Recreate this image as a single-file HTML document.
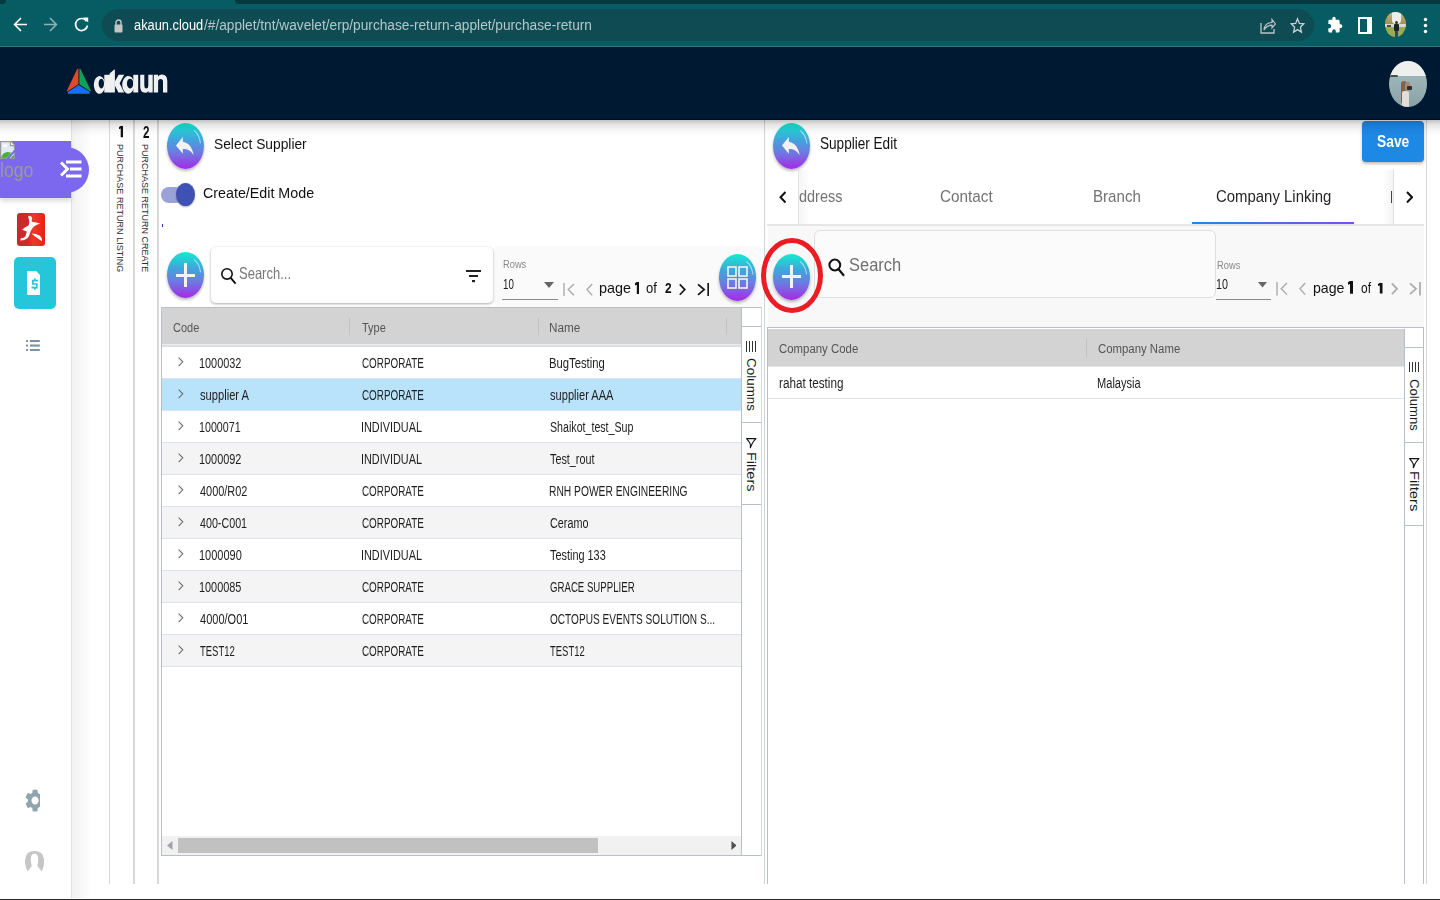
<!DOCTYPE html>
<html><head><meta charset="utf-8"><title>akaun</title>
<style>
html,body{margin:0;padding:0;background:#fff;width:1440px;height:900px;overflow:hidden}
#root{position:relative;width:1440px;height:900px;overflow:hidden;background:#fff;font-family:"Liberation Sans",sans-serif}
.a{position:absolute;display:block}
.t{position:absolute;white-space:nowrap;line-height:1;transform-origin:0 0}
</style></head><body><div id="root">
<div class="a" style="left:0px;top:0px;width:1440px;height:47px;background:#075c63"></div>
<div class="a" style="left:235px;top:0px;width:1205px;height:4px;background:#04393f;border-bottom-left-radius:6px"></div>
<div class="a" style="left:0px;top:0px;width:6px;height:4px;background:#04393f;border-bottom-right-radius:6px"></div>
<div class="a" style="left:0px;top:46px;width:1440px;height:1px;background:#2f777c"></div>
<svg class="a" style="left:13px;top:16px;" width="15" height="17" viewBox="0 0 15 17" preserveAspectRatio="none"><path d="M14 8.5H2 M8 2L1.6 8.5L8 15" stroke="#fff" stroke-width="1.6" fill="none"/></svg>
<svg class="a" style="left:44px;top:16px;" width="14" height="17" viewBox="0 0 14 17" preserveAspectRatio="none"><path d="M0 8.5H12.4 M6 2L12.4 8.5L6 15" stroke="#8bb3b6" stroke-width="1.6" fill="none"/></svg>
<svg class="a" style="left:74px;top:16px;" width="15" height="17" viewBox="0 0 15 17" preserveAspectRatio="none"><path d="M12.6 5.2 A6 6 0 1 0 13.5 9.5" stroke="#fff" stroke-width="1.7" fill="none"/><path d="M9 1.5 L14.2 1.5 L14.2 6.6 Z" fill="#fff"/></svg>
<div class="a" style="left:102px;top:9px;width:1212px;height:32px;background:#0f4b52;border-radius:16px"></div>
<svg class="a" style="left:114px;top:18px;" width="9" height="15" viewBox="0 0 9 15" preserveAspectRatio="none"><path d="M2 7V4.5A2.5 2.5 0 0 1 7 4.5V7" stroke="#c2c6c7" stroke-width="1.4" fill="none"/><rect x="0.5" y="6.5" width="8" height="8" rx="1" fill="#c2c6c7"/></svg>
<span class="t" style="left:134.20px;top:18.35px;font-size:14.70px;color:#ffffff;font-weight:400;font-family:'Liberation Sans';transform:scaleX(0.8730);">akaun.cloud</span>
<span class="t" style="left:204.20px;top:18.35px;font-size:14.70px;color:#b3c8ca;font-weight:400;font-family:'Liberation Sans';transform:scaleX(0.9317);">/#/applet/tnt/wavelet/erp/purchase-return-applet/purchase-return</span>
<svg class="a" style="left:1260px;top:17px;" width="16" height="17" viewBox="0 0 16 17" preserveAspectRatio="none"><path d="M1 6V16H14V12" stroke="#b8c6c8" stroke-width="1.3" fill="none"/><path d="M4 13C4.5 8 8 5.5 12 5.5V2.5L15.5 7L12 11V8.2C8.5 8.2 6 10 4 13Z" stroke="#b8c6c8" stroke-width="1.2" fill="none"/></svg>
<svg class="a" style="left:1290px;top:17px;" width="15" height="17" viewBox="0 0 24 24" preserveAspectRatio="none"><path d="M12 2.5l2.9 6.6 7.1.6-5.4 4.7 1.6 7-6.2-3.7-6.2 3.7 1.6-7L2 9.7l7.1-.6z" stroke="#c9d4d5" stroke-width="2" fill="none"/></svg>
<svg class="a" style="left:1327px;top:16px;" width="16" height="18" viewBox="0 0 24 24" preserveAspectRatio="none"><path d="M20.5 11H19V7c0-1.1-.9-2-2-2h-4V3.5C13 2.12 11.88 1 10.5 1S8 2.12 8 3.5V5H4c-1.1 0-1.99.9-1.99 2v3.8H3.5c1.49 0 2.7 1.21 2.7 2.7s-1.21 2.7-2.7 2.7H2V20c0 1.1.9 2 2 2h3.8v-1.5c0-1.49 1.21-2.7 2.7-2.7 1.49 0 2.7 1.21 2.7 2.7V22H17c1.1 0 2-.9 2-2v-4h1.5c1.38 0 2.5-1.12 2.5-2.5S21.88 11 20.5 11z" fill="#fff"/></svg>
<svg class="a" style="left:1358px;top:16.5px;" width="14" height="17.0" viewBox="0 0 14 17" preserveAspectRatio="none"><rect x="1" y="1" width="12" height="15" stroke="#fff" stroke-width="2" fill="none"/><rect x="9" y="1" width="4" height="15" fill="#fff"/></svg>
<div class="a" style="left:1385.2px;top:11.7px;width:20.8px;height:25.8px;border-radius:50%;overflow:hidden;background:#9aac50"><div class="a" style="left:0;top:0;width:21px;height:26px;filter:blur(0.5px)"><div class="a" style="left:0;top:0;width:21px;height:14px;background:linear-gradient(#c9b27a,#9c8a4c)"></div><div class="a" style="left:7px;top:0;width:9px;height:12px;border-radius:0 0 4px 4px;background:#eceeec"></div><div class="a" style="left:0;top:12px;width:21px;height:3px;background:#d9dcd6"></div><div class="a" style="left:2px;top:13px;width:4px;height:2px;background:#50503a"></div><div class="a" style="left:9.5px;top:9.5px;width:3px;height:3px;border-radius:50%;background:#3a3226"></div><div class="a" style="left:8.5px;top:12.5px;width:5px;height:7px;border-radius:1px;background:#1c222c"></div><div class="a" style="left:9.5px;top:19.5px;width:3px;height:7px;background:#2b4676"></div></div></div>
<svg class="a" style="left:1423px;top:17px;" width="5" height="17" viewBox="0 0 5 17" preserveAspectRatio="none"><circle cx="2.5" cy="2.5" r="1.7" fill="#fff"/><circle cx="2.5" cy="8.5" r="1.7" fill="#fff"/><circle cx="2.5" cy="14.5" r="1.7" fill="#fff"/></svg>
<div class="a" style="left:0px;top:47px;width:1440px;height:73px;background:#001933"></div>
<svg class="a" style="left:66px;top:68px;" width="26" height="27" viewBox="0 0 26 27" preserveAspectRatio="none"><path d="M11.2 0.9 Q11.8 0.5 12.4 0.8 L12.4 16.3 L1.3 23.5 Q0.6 23.2 1 22.4 Z" fill="#e04a2c"/><path d="M13.4 0.8 Q14.1 0.6 14.6 1.2 L24.8 22.4 Q25 23.2 24.4 23.4 L13.3 16.3 Z" fill="#07a35a"/><path d="M12.7 16.9 L23.8 23.9 Q24.2 25.8 22.3 25.8 L2.8 25.8 Q0.9 25.8 1.8 24.1 Z" fill="#1a6ff0"/></svg>
<svg class="a" style="left:92px;top:66px" width="78" height="30" viewBox="92 66 78 30"><g fill="#f0f0f0"><path fill-rule="evenodd" d="M105 83.6 A5.6 8.85 0 1 1 104.99 83.5 Z M104 83.5 A2.7 4.9 0 1 0 104 83.6 Z"/><rect x="104.3" y="74.8" width="6" height="17.7"/><path d="M109.6 73.6 L114.3 69.4 L114.9 69.4 V92.5 H109.6 Z"/><path d="M114.8 81.6 L118.7 74.8 H124.2 L119.6 83.3 L124.1 92.5 H118.4 L114.8 85.6 Z"/><path fill-rule="evenodd" d="M134.2 83.6 A6 8.85 0 1 1 134.19 83.5 Z M133.3 83.5 A3.2 4.9 0 1 0 133.3 83.6 Z"/><rect x="133.3" y="74.8" width="4.9" height="17.7"/><path d="M140.2 74.8 H144.3 V85.8 Q144.3 88.5 146.3 88.5 Q148.3 88.5 148.3 85.8 V74.8 H152.7 V92.5 H148.5 V90.9 Q147.2 92.8 145.1 92.8 Q140.2 92.8 140.2 86.6 Z"/><path d="M153.8 92.5 V74.8 H158 V76.5 Q159.4 74.5 161.9 74.5 Q167.3 74.5 167.3 81 V92.5 H163 V81.6 Q163 79 160.6 79 Q158.1 79 158.1 81.6 V92.5 Z"/></g></svg>
<div class="a" style="left:1389.4px;top:61px;width:37.8px;height:46.2px;border-radius:50%;overflow:hidden;background:linear-gradient(#a7bcc0,#8aa3a8)"><div class="a" style="left:0;top:0;width:38px;height:47px;filter:blur(0.6px)"><div class="a" style="left:0;top:0;width:38px;height:15px;background:#eef0ee"></div><div class="a" style="left:1px;top:13.5px;width:8px;height:2px;border-radius:1px;background:#3e5552"></div><div class="a" style="left:12px;top:20px;width:6px;height:22px;border-radius:3px 3px 1px 1px;background:#7a6650"></div><div class="a" style="left:13px;top:30px;width:7px;height:17px;border-radius:2px;background:#e4dcd6"></div><div class="a" style="left:16px;top:21px;width:5px;height:9px;border-radius:2px;background:#a8896e"></div><div class="a" style="left:18px;top:25px;width:5px;height:4px;border-radius:1px;background:#2a2f33"></div></div></div>
<div class="a" style="left:0px;top:119px;width:1440px;height:1px;background:#000b1f"></div>
<div class="a" style="left:70.5px;top:120px;width:1.5px;height:778px;background:#e2e2e2"></div>
<div class="a" style="left:72px;top:120px;width:20px;height:778px;background:linear-gradient(90deg,#f2f2f2,rgba(255,255,255,0))"></div>
<div class="a" style="left:0px;top:141px;width:71px;height:57px;background:#7b68ee;box-shadow:0 3px 5px rgba(0,0,0,0.15)"></div>
<div class="a" style="left:43px;top:147px;width:46px;height:46px;border-radius:50%;background:#7b68ee"></div>
<svg class="a" style="left:0px;top:141px;" width="15" height="18.5" viewBox="0 0 15 18.5" preserveAspectRatio="none"><path d="M0 0H10.5L14.5 4V8.5L6.3 17.5H0Z" fill="#dfe9f7"/><path d="M14.5 11.6V17.5H9.3Z" fill="#dfe9f7"/><path d="M0.8 17.5Q3.5 8.8 11.2 11.8L6.3 17.5Z" fill="#4caf35"/><path d="M10.2 17.5L14.5 13V17.5Z" fill="#4caf35"/><ellipse cx="5" cy="4.8" rx="2.4" ry="1.2" fill="#fff"/><path d="M0.6 17.5V0.6H10.5L14.4 4.5V8.4M14.4 11.6V17.4H9.6M0.6 17.4H6.2" stroke="#9a9a9a" stroke-width="1.2" fill="none"/><path d="M10.4 0.6V4.6H14.4" stroke="#9a9a9a" stroke-width="1.1" fill="#f4f4f4"/></svg>
<span class="t" style="left:-0.40px;top:160.99px;font-size:19.50px;color:#9a9a9a;font-weight:400;font-family:'Liberation Sans';transform:scaleX(0.9022);">logo</span>
<svg class="a" style="left:60px;top:160px;" width="22" height="18" viewBox="0 0 22 18" preserveAspectRatio="none"><path d="M1 2.5L7.5 9L1 15.5" stroke="#fff" stroke-width="3" fill="none"/><rect x="6" y="0.5" width="15.5" height="3" fill="#fff"/><rect x="10" y="7.5" width="11.5" height="3" fill="#fff"/><rect x="6" y="14.5" width="15.5" height="3" fill="#fff"/></svg>
<div class="a" style="left:17px;top:213.3px;width:28px;height:32.3px;border-radius:3px;background:linear-gradient(90deg,#c8282e,#cf2a2a 40%,#ec3a26 60%,#e4201c)"></div>
<svg class="a" style="left:17px;top:213.3px;" width="28" height="32.3" viewBox="0 0 28 32.3" preserveAspectRatio="none"><path d="M11.2 3.2 Q13 2 15.2 4.5 Q14.6 7 14.8 8.8 Q19 9.5 23.3 10.6 Q18.5 12 16.2 14.2 Q14 17 13.2 19.5 Q12.5 23 10.5 25.2 Q7 27.5 3.6 27.4 Q3 26 4.2 25.3 Q7 25 8.4 23.5 Q9.3 21 9.8 18.6 Q8 18 5.2 16.8 Q8 14.2 11.6 12.6 Q12.5 10 12.2 7.5 Q11.5 5 11.2 3.2 Z" fill="#fff"/><path d="M14.5 20.5 Q19 20.5 22.5 22.5 Q25.5 25 25 28.3 Q21.5 26 17.5 23 Z" fill="#fff"/></svg>
<div class="a" style="left:14px;top:257px;width:42px;height:52px;background:#26c6da;border-radius:5px"></div>
<svg class="a" style="left:27px;top:271px;" width="13" height="24" viewBox="0 0 13 24" preserveAspectRatio="none"><path d="M0 1Q0 0 1 0H9L13 4V23Q13 24 12 24H1Q0 24 0 23Z" fill="#fff"/><path d="M10.1 10.6V9.6H5.8V13H9.8V16.6H5.4V15.6M7.9 7.6V9.6M7.9 16.6V18.8" stroke="#26c6da" stroke-width="1.7" fill="none"/></svg>
<svg class="a" style="left:26.2px;top:339.9px;" width="13.8" height="11.2" viewBox="0 0 13.8 11.2" preserveAspectRatio="none"><rect x="0" y="0" width="2.1" height="2.1" rx="0.5" fill="#7d929d"/><rect x="0" y="4.5" width="2.1" height="2.1" rx="0.5" fill="#7d929d"/><rect x="0" y="9" width="2.1" height="2.1" rx="0.5" fill="#7d929d"/><rect x="3.9" y="0" width="9.9" height="2.1" fill="#7d929d"/><rect x="3.9" y="4.5" width="9.9" height="2.1" fill="#7d929d"/><rect x="3.9" y="9" width="9.9" height="2.1" fill="#7d929d"/></svg>
<svg class="a" style="left:22.75px;top:787.4px;" width="17.25" height="27.1" viewBox="0 0 17.18 24" preserveAspectRatio="none"><path d="M19.14 12.94c.04-.3.06-.61.06-.94 0-.32-.02-.64-.07-.94l2.03-1.58c.18-.14.23-.41.12-.61l-1.92-3.32c-.12-.22-.37-.29-.59-.22l-2.39.96c-.5-.38-1.03-.7-1.62-.94l-.36-2.54c-.04-.24-.24-.41-.48-.41h-3.84c-.24 0-.43.17-.47.41l-.36 2.54c-.59.24-1.13.57-1.62.94l-2.39-.96c-.22-.08-.47 0-.59.22L2.74 8.87c-.12.21-.08.47.12.61l2.03 1.58c-.05.3-.09.63-.09.94s.02.64.07.94l-2.03 1.58c-.18.14-.23.41-.12.61l1.92 3.32c.12.22.37.29.59.22l2.39-.96c.5.38 1.03.7 1.62.94l.36 2.54c.05.24.24.41.48.41h3.84c.24 0 .44-.17.47-.41l.36-2.54c.59-.24 1.13-.56 1.62-.94l2.39.96c.22.08.47 0 .59-.22l1.92-3.32c.12-.22.07-.47-.12-.61l-2.01-1.58zM12 15.6c-1.98 0-3.6-1.62-3.6-3.6s1.62-3.6 3.6-3.6 3.6 1.62 3.6 3.6-1.62 3.6-3.6 3.6z" fill="#90a4ae"/></svg>
<svg class="a" style="left:25px;top:851px;" width="19.2" height="20.4" viewBox="0 0 19.2 20.4" preserveAspectRatio="none"><path d="M2.7 20.4 Q-0.4 15 0 9.5 Q0.6 0 9.6 0 Q18.6 0 19.2 9.5 Q19.6 15 16.5 20.4 L12.4 15 Q13.1 12.5 13.2 9 Q13.2 2.6 9.6 2.6 Q5.8 2.6 5.8 9 Q5.9 12.5 6.8 15 Z" fill="#c6c6c6"/></svg>
<div class="a" style="left:109px;top:120px;width:1px;height:764px;background:#d9d9d9"></div>
<div class="a" style="left:133px;top:120px;width:2px;height:764px;background:#d9d9d9"></div>
<div class="a" style="left:157px;top:120px;width:2px;height:764px;background:#d9d9d9"></div>
<svg class="a" style="left:119.1px;top:126.3px;" width="4.3" height="11.3" viewBox="0 0 10 24" preserveAspectRatio="none"><path d="M3.6 0H10V24H4V5.5L0 7V2.2Z" fill="#111"/></svg>
<span class="t" style="left:142.70px;top:123.94px;font-size:16.13px;color:#111;font-weight:700;font-family:'Liberation Sans';transform:scaleX(0.7222);">2</span>
<span class="t" style="left:125.42px;top:144.30px;font-size:9.59px;color:#2e2e2e;font-weight:400;font-family:'Liberation Sans';transform:rotate(90deg) scaleX(0.9463);">PURCHASE RETURN LISTING</span>
<span class="t" style="left:149.92px;top:144.30px;font-size:9.59px;color:#2e2e2e;font-weight:400;font-family:'Liberation Sans';transform:rotate(90deg) scaleX(0.9398);">PURCHASE RETURN CREATE</span>
<div class="a" style="left:166.5px;top:122.7px;width:37.2px;height:46.0px;background:linear-gradient(180deg,#12ead0 0%,#3fa6dc 35%,#6f78e2 65%,#a629e6 100%);border-radius:50%;box-shadow:0 2px 3px rgba(0,0,0,0.28)"></div><svg class="a" style="left:166.5px;top:122.7px;" width="37.2" height="46.0" viewBox="0 0 40 50" preserveAspectRatio="none"><path d="M29 8 Q35 13 36 22" stroke="rgba(255,255,255,0.55)" stroke-width="1.2" fill="none"/></svg><svg class="a" style="left:172.7px;top:130.7px;" width="23.6" height="28.8" viewBox="0 0 24 24" preserveAspectRatio="none"><path d="M10 9V5l-7 7 7 7v-4.1c5 0 8.5 1.6 11 5.1-1-5-4-10-11-11z" fill="#f2f2f2"/></svg>
<span class="t" style="left:214.00px;top:136.25px;font-size:15.41px;color:#111;font-weight:400;font-family:'Liberation Sans';transform:scaleX(0.8946);">Select Supplier</span>
<div class="a" style="left:161px;top:187.3px;width:23px;height:15.4px;background:#9aa3d8;border-radius:8px"></div>
<div class="a" style="left:176px;top:183px;width:19px;height:23px;border-radius:50%;background:#3f51b5;box-shadow:0 1px 2px rgba(0,0,0,0.3)"></div>
<span class="t" style="left:202.50px;top:186.39px;font-size:14.53px;color:#111;font-weight:400;font-family:'Liberation Sans';transform:scaleX(0.9833);">Create/Edit Mode</span>
<div class="a" style="left:161.5px;top:224px;width:1.5px;height:2.5px;background:#283593"></div>
<div class="a" style="left:495px;top:246px;width:266px;height:61px;background:#fafafa"></div>
<div class="a" style="left:166.5px;top:252px;width:37.3px;height:46.2px;background:linear-gradient(180deg,#12ead0 0%,#3fa6dc 35%,#6f78e2 65%,#a629e6 100%);border-radius:50%;box-shadow:0 2px 3px rgba(0,0,0,0.28)"></div><svg class="a" style="left:166.5px;top:252px;" width="37.3" height="46.2" viewBox="0 0 40 50" preserveAspectRatio="none"><path d="M29 8 Q35 13 36 22" stroke="rgba(255,255,255,0.55)" stroke-width="1.2" fill="none"/></svg><div class="a" style="left:175.65px;top:273.5px;width:19.0px;height:3.2px;background:#f3f3f3"></div><div class="a" style="left:183.65px;top:263.40000000000003px;width:3.0px;height:23.4px;background:#f3f3f3"></div>
<div class="a" style="left:210.5px;top:246.7px;width:282.5px;height:56.3px;background:#fff;border-radius:5px;box-shadow:0 1px 3px rgba(0,0,0,0.33)"></div>
<svg class="a" style="left:220px;top:267px;" width="17" height="18" viewBox="0 0 17 18" preserveAspectRatio="none"><circle cx="7" cy="6.9" r="5.2" stroke="#111" stroke-width="1.6" fill="none"/><path d="M10.7 10.9L15.6 16.6" stroke="#111" stroke-width="1.9"/></svg>
<span class="t" style="left:238.50px;top:265.85px;font-size:16.72px;color:#777;font-weight:400;font-family:'Liberation Sans';transform:scaleX(0.7779);">Search...</span>
<svg class="a" style="left:466px;top:270px;" width="15" height="13" viewBox="0 0 15 13" preserveAspectRatio="none"><rect x="0" y="0" width="15" height="2" fill="#222"/><rect x="3" y="5" width="9" height="2" fill="#222"/><rect x="6" y="10" width="3" height="2.2" fill="#222"/></svg>
<span class="t" style="left:503.00px;top:258.62px;font-size:10.61px;color:#888;font-weight:400;font-family:'Liberation Sans';transform:scaleX(0.8771);">Rows</span>
<span class="t" style="left:502.85px;top:276.72px;font-size:14.97px;color:#222;font-weight:400;font-family:'Liberation Sans';transform:scaleX(0.6525);">10</span>
<svg class="a" style="left:543.5px;top:282px;" width="10.0" height="6" viewBox="0 0 10 6" preserveAspectRatio="none"><path d="M0 0H10L5 6Z" fill="#666"/></svg>
<div class="a" style="left:502px;top:298.6px;width:55.5px;height:1.4px;background:#8a8a8a"></div>
<svg class="a" style="left:562.5px;top:283px;" width="12.0" height="13.2" viewBox="0 0 12 14" preserveAspectRatio="none"><path d="M1 0V14" stroke="#adadad" stroke-width="1.45"/><path d="M11 1L5.2 7L11 13" stroke="#adadad" stroke-width="1.45" fill="none"/></svg><svg class="a" style="left:585.5px;top:283px;" width="7.0" height="13.2" viewBox="0 0 7 14" preserveAspectRatio="none"><path d="M6.2 1L1 7L6.2 13" stroke="#adadad" stroke-width="1.45" fill="none"/></svg><svg class="a" style="left:679.2px;top:283px;" width="6.8" height="13.2" viewBox="0 0 7 14" preserveAspectRatio="none"><path d="M0.8 1.5L6 7L0.8 12.5" stroke="#1a1a1a" stroke-width="1.8" fill="none"/></svg><svg class="a" style="left:697px;top:283px;" width="12.3" height="13.2" viewBox="0 0 12 14" preserveAspectRatio="none"><path d="M1 1.5L7 7L1 12.5" stroke="#1a1a1a" stroke-width="1.8" fill="none"/><path d="M11 0V14" stroke="#1a1a1a" stroke-width="1.8"/></svg>
<span class="t" style="left:598.80px;top:280.47px;font-size:15.15px;color:#111;font-weight:400;font-family:'Liberation Sans';transform:scaleX(0.9500);">page</span>
<svg class="a" style="left:634.6px;top:281.5px;" width="4.6" height="12.3" viewBox="0 0 10 24" preserveAspectRatio="none"><path d="M3.6 0H10V24H4V5.5L0 7V2.2Z" fill="#111"/></svg>
<span class="t" style="left:646.00px;top:280.25px;font-size:15.41px;color:#111;font-weight:400;font-family:'Liberation Sans';transform:scaleX(0.8481);">of</span>
<span class="t" style="left:664.60px;top:280.95px;font-size:14.83px;color:#111;font-weight:700;font-family:'Liberation Sans';transform:scaleX(0.8000);">2</span>
<div class="a" style="left:718.7px;top:254px;width:37.8px;height:47px;background:linear-gradient(180deg,#12ead0 0%,#3fa6dc 35%,#6f78e2 65%,#a629e6 100%);border-radius:50%;box-shadow:0 2px 3px rgba(0,0,0,0.28)"></div><svg class="a" style="left:718.7px;top:254px;" width="37.8" height="47" viewBox="0 0 40 50" preserveAspectRatio="none"><path d="M29 8 Q35 13 36 22" stroke="rgba(255,255,255,0.55)" stroke-width="1.2" fill="none"/></svg><svg class="a" style="left:727px;top:266px;" width="21" height="23" viewBox="0 0 21 23" preserveAspectRatio="none"><rect x="1" y="1" width="8" height="9" stroke="#f3f3f3" stroke-width="1.6" fill="none"/><rect x="12" y="1" width="8" height="9" stroke="#f3f3f3" stroke-width="1.6" fill="none"/><rect x="1" y="13" width="8" height="9" stroke="#f3f3f3" stroke-width="1.6" fill="none"/><rect x="12" y="13" width="8" height="9" stroke="#f3f3f3" stroke-width="1.6" fill="none"/></svg>
<div class="a" style="left:161px;top:307px;width:601px;height:549px;border:1px solid #babfc7;box-sizing:border-box;background:#fff"></div>
<div class="a" style="left:162px;top:308px;width:579px;height:36px;background:#d3d3d3"></div>
<div class="a" style="left:162px;top:344px;width:579px;height:1px;background:#e9ebed"></div>
<div class="a" style="left:162px;top:345px;width:579px;height:2px;background:#dce0e4"></div>
<div class="a" style="left:349px;top:318px;width:1px;height:17px;background:#c2c2c2"></div>
<div class="a" style="left:538px;top:318px;width:1px;height:17px;background:#c2c2c2"></div>
<div class="a" style="left:726px;top:318px;width:1px;height:17px;background:#c2c2c2"></div>
<span class="t" style="left:173.40px;top:320.52px;font-size:13.08px;color:#555;font-weight:400;font-family:'Liberation Sans';transform:scaleX(0.8389);">Code</span>
<span class="t" style="left:362.20px;top:320.52px;font-size:13.08px;color:#555;font-weight:400;font-family:'Liberation Sans';transform:scaleX(0.8405);">Type</span>
<span class="t" style="left:549.10px;top:320.52px;font-size:13.08px;color:#555;font-weight:400;font-family:'Liberation Sans';transform:scaleX(0.8985);">Name</span>
<div class="a" style="left:162px;top:347px;width:579px;height:32px;background:#ffffff;border-bottom:1px solid #dde2eb;box-sizing:border-box"></div>
<svg class="a" style="left:178px;top:357.3px;" width="5.5" height="9.7" viewBox="0 0 5.5 9.5" preserveAspectRatio="none"><path d="M0.6 0.6L4.8 4.75L0.6 8.9" stroke="#666" stroke-width="1" fill="none"/></svg>
<span class="t" style="left:199.43px;top:356.04px;font-size:14.24px;color:#1e1e1e;font-weight:400;font-family:'Liberation Sans';transform:scaleX(0.7652);">1000032</span>
<span class="t" style="left:361.70px;top:356.04px;font-size:14.24px;color:#1e1e1e;font-weight:400;font-family:'Liberation Sans';transform:scaleX(0.6929);">CORPORATE</span>
<span class="t" style="left:549.01px;top:356.04px;font-size:14.24px;color:#1e1e1e;font-weight:400;font-family:'Liberation Sans';transform:scaleX(0.7911);">BugTesting</span>
<div class="a" style="left:162px;top:379px;width:579px;height:32px;background:#b9e3fa;border-bottom:1px solid #dde2eb;box-sizing:border-box"></div>
<svg class="a" style="left:178px;top:389.3px;" width="5.5" height="9.7" viewBox="0 0 5.5 9.5" preserveAspectRatio="none"><path d="M0.6 0.6L4.8 4.75L0.6 8.9" stroke="#666" stroke-width="1" fill="none"/></svg>
<span class="t" style="left:200.20px;top:388.04px;font-size:14.24px;color:#1e1e1e;font-weight:400;font-family:'Liberation Sans';transform:scaleX(0.7837);">supplier A</span>
<span class="t" style="left:361.70px;top:388.04px;font-size:14.24px;color:#1e1e1e;font-weight:400;font-family:'Liberation Sans';transform:scaleX(0.6929);">CORPORATE</span>
<span class="t" style="left:549.80px;top:388.04px;font-size:14.24px;color:#1e1e1e;font-weight:400;font-family:'Liberation Sans';transform:scaleX(0.7791);">supplier AAA</span>
<div class="a" style="left:162px;top:411px;width:579px;height:32px;background:#ffffff;border-bottom:1px solid #dde2eb;box-sizing:border-box"></div>
<svg class="a" style="left:178px;top:421.3px;" width="5.5" height="9.7" viewBox="0 0 5.5 9.5" preserveAspectRatio="none"><path d="M0.6 0.6L4.8 4.75L0.6 8.9" stroke="#666" stroke-width="1" fill="none"/></svg>
<span class="t" style="left:199.45px;top:420.04px;font-size:14.24px;color:#1e1e1e;font-weight:400;font-family:'Liberation Sans';transform:scaleX(0.7523);">1000071</span>
<span class="t" style="left:360.94px;top:420.04px;font-size:14.24px;color:#1e1e1e;font-weight:400;font-family:'Liberation Sans';transform:scaleX(0.7636);">INDIVIDUAL</span>
<span class="t" style="left:549.80px;top:420.04px;font-size:14.24px;color:#1e1e1e;font-weight:400;font-family:'Liberation Sans';transform:scaleX(0.7478);">Shaikot_test_Sup</span>
<div class="a" style="left:162px;top:443px;width:579px;height:32px;background:#f4f4f4;border-bottom:1px solid #dde2eb;box-sizing:border-box"></div>
<svg class="a" style="left:178px;top:453.3px;" width="5.5" height="9.7" viewBox="0 0 5.5 9.5" preserveAspectRatio="none"><path d="M0.6 0.6L4.8 4.75L0.6 8.9" stroke="#666" stroke-width="1" fill="none"/></svg>
<span class="t" style="left:199.43px;top:452.04px;font-size:14.24px;color:#1e1e1e;font-weight:400;font-family:'Liberation Sans';transform:scaleX(0.7652);">1000092</span>
<span class="t" style="left:360.94px;top:452.04px;font-size:14.24px;color:#1e1e1e;font-weight:400;font-family:'Liberation Sans';transform:scaleX(0.7636);">INDIVIDUAL</span>
<span class="t" style="left:549.80px;top:452.04px;font-size:14.24px;color:#1e1e1e;font-weight:400;font-family:'Liberation Sans';transform:scaleX(0.7595);">Test_rout</span>
<div class="a" style="left:162px;top:475px;width:579px;height:32px;background:#ffffff;border-bottom:1px solid #dde2eb;box-sizing:border-box"></div>
<svg class="a" style="left:178px;top:485.3px;" width="5.5" height="9.7" viewBox="0 0 5.5 9.5" preserveAspectRatio="none"><path d="M0.6 0.6L4.8 4.75L0.6 8.9" stroke="#666" stroke-width="1" fill="none"/></svg>
<span class="t" style="left:200.20px;top:484.04px;font-size:14.24px;color:#1e1e1e;font-weight:400;font-family:'Liberation Sans';transform:scaleX(0.7684);">4000/R02</span>
<span class="t" style="left:361.70px;top:484.04px;font-size:14.24px;color:#1e1e1e;font-weight:400;font-family:'Liberation Sans';transform:scaleX(0.6929);">CORPORATE</span>
<span class="t" style="left:549.08px;top:484.04px;font-size:14.24px;color:#1e1e1e;font-weight:400;font-family:'Liberation Sans';transform:scaleX(0.7211);">RNH POWER ENGINEERING</span>
<div class="a" style="left:162px;top:507px;width:579px;height:32px;background:#f4f4f4;border-bottom:1px solid #dde2eb;box-sizing:border-box"></div>
<svg class="a" style="left:178px;top:517.3px;" width="5.5" height="9.7" viewBox="0 0 5.5 9.5" preserveAspectRatio="none"><path d="M0.6 0.6L4.8 4.75L0.6 8.9" stroke="#666" stroke-width="1" fill="none"/></svg>
<span class="t" style="left:200.20px;top:516.04px;font-size:14.24px;color:#1e1e1e;font-weight:400;font-family:'Liberation Sans';transform:scaleX(0.7524);">400-C001</span>
<span class="t" style="left:361.70px;top:516.04px;font-size:14.24px;color:#1e1e1e;font-weight:400;font-family:'Liberation Sans';transform:scaleX(0.6929);">CORPORATE</span>
<span class="t" style="left:549.80px;top:516.04px;font-size:14.24px;color:#1e1e1e;font-weight:400;font-family:'Liberation Sans';transform:scaleX(0.7612);">Ceramo</span>
<div class="a" style="left:162px;top:539px;width:579px;height:32px;background:#ffffff;border-bottom:1px solid #dde2eb;box-sizing:border-box"></div>
<svg class="a" style="left:178px;top:549.3px;" width="5.5" height="9.7" viewBox="0 0 5.5 9.5" preserveAspectRatio="none"><path d="M0.6 0.6L4.8 4.75L0.6 8.9" stroke="#666" stroke-width="1" fill="none"/></svg>
<span class="t" style="left:199.43px;top:548.04px;font-size:14.24px;color:#1e1e1e;font-weight:400;font-family:'Liberation Sans';transform:scaleX(0.7725);">1000090</span>
<span class="t" style="left:360.94px;top:548.04px;font-size:14.24px;color:#1e1e1e;font-weight:400;font-family:'Liberation Sans';transform:scaleX(0.7636);">INDIVIDUAL</span>
<span class="t" style="left:549.80px;top:548.04px;font-size:14.24px;color:#1e1e1e;font-weight:400;font-family:'Liberation Sans';transform:scaleX(0.7656);">Testing 133</span>
<div class="a" style="left:162px;top:571px;width:579px;height:32px;background:#f4f4f4;border-bottom:1px solid #dde2eb;box-sizing:border-box"></div>
<svg class="a" style="left:178px;top:581.3px;" width="5.5" height="9.7" viewBox="0 0 5.5 9.5" preserveAspectRatio="none"><path d="M0.6 0.6L4.8 4.75L0.6 8.9" stroke="#666" stroke-width="1" fill="none"/></svg>
<span class="t" style="left:199.43px;top:580.04px;font-size:14.24px;color:#1e1e1e;font-weight:400;font-family:'Liberation Sans';transform:scaleX(0.7652);">1000085</span>
<span class="t" style="left:361.70px;top:580.04px;font-size:14.24px;color:#1e1e1e;font-weight:400;font-family:'Liberation Sans';transform:scaleX(0.6929);">CORPORATE</span>
<span class="t" style="left:549.80px;top:580.04px;font-size:14.24px;color:#1e1e1e;font-weight:400;font-family:'Liberation Sans';transform:scaleX(0.6768);">GRACE SUPPLIER</span>
<div class="a" style="left:162px;top:603px;width:579px;height:32px;background:#ffffff;border-bottom:1px solid #dde2eb;box-sizing:border-box"></div>
<svg class="a" style="left:178px;top:613.3px;" width="5.5" height="9.7" viewBox="0 0 5.5 9.5" preserveAspectRatio="none"><path d="M0.6 0.6L4.8 4.75L0.6 8.9" stroke="#666" stroke-width="1" fill="none"/></svg>
<span class="t" style="left:200.20px;top:612.04px;font-size:14.24px;color:#1e1e1e;font-weight:400;font-family:'Liberation Sans';transform:scaleX(0.7746);">4000/O01</span>
<span class="t" style="left:361.70px;top:612.04px;font-size:14.24px;color:#1e1e1e;font-weight:400;font-family:'Liberation Sans';transform:scaleX(0.6929);">CORPORATE</span>
<span class="t" style="left:549.80px;top:612.04px;font-size:14.24px;color:#1e1e1e;font-weight:400;font-family:'Liberation Sans';transform:scaleX(0.7083);">OCTOPUS EVENTS SOLUTION S...</span>
<div class="a" style="left:162px;top:635px;width:579px;height:32px;background:#f4f4f4;border-bottom:1px solid #dde2eb;box-sizing:border-box"></div>
<svg class="a" style="left:178px;top:645.3px;" width="5.5" height="9.7" viewBox="0 0 5.5 9.5" preserveAspectRatio="none"><path d="M0.6 0.6L4.8 4.75L0.6 8.9" stroke="#666" stroke-width="1" fill="none"/></svg>
<span class="t" style="left:200.20px;top:644.04px;font-size:14.24px;color:#1e1e1e;font-weight:400;font-family:'Liberation Sans';transform:scaleX(0.6655);">TEST12</span>
<span class="t" style="left:361.70px;top:644.04px;font-size:14.24px;color:#1e1e1e;font-weight:400;font-family:'Liberation Sans';transform:scaleX(0.6929);">CORPORATE</span>
<span class="t" style="left:549.80px;top:644.04px;font-size:14.24px;color:#1e1e1e;font-weight:400;font-family:'Liberation Sans';transform:scaleX(0.6655);">TEST12</span>
<div class="a" style="left:741px;top:308px;width:1px;height:547px;background:#babfc7"></div>
<div class="a" style="left:742px;top:326px;width:19px;height:1px;background:#babfc7"></div>
<div class="a" style="left:742px;top:422px;width:19px;height:1px;background:#babfc7"></div>
<div class="a" style="left:742px;top:504px;width:19px;height:1px;background:#babfc7"></div>
<svg class="a" style="left:746px;top:341px;" width="11" height="11" viewBox="0 0 11 11" preserveAspectRatio="none"><path d="M0.5 0V11M3.5 0V11M6.5 0V11M9.5 0V11" stroke="#333" stroke-width="1"/></svg>
<div class="a" style="left:761px;top:307px;width:1px;height:549px;background:#d3d8dd"></div>
<span class="t" style="left:756.51px;top:358.00px;font-size:12.06px;color:#1a1a1a;font-weight:400;font-family:'Liberation Sans';transform:rotate(90deg) scaleX(1.1155);">Columns</span>
<svg class="a" style="left:746px;top:438px;" width="10.5" height="10.5" viewBox="0 0 10.5 10.5" preserveAspectRatio="none"><path d="M0.6 0.6 H9.9 Q7.2 3.4 6.1 5.8 L4.3 9.8 Q4.6 7.2 4.2 5.8 Q2.8 3.2 0.6 0.6 Z" stroke="#111" stroke-width="1.1" fill="none" stroke-linejoin="round"/></svg>
<span class="t" style="left:756.51px;top:451.50px;font-size:12.06px;color:#1a1a1a;font-weight:400;font-family:'Liberation Sans';transform:rotate(90deg) scaleX(1.2054);">Filters</span>
<div class="a" style="left:162px;top:836px;width:579px;height:19px;background:#f1f1f1"></div>
<svg class="a" style="left:167px;top:841px;" width="6" height="9" viewBox="0 0 6 9" preserveAspectRatio="none"><path d="M5.5 0V9L0 4.5Z" fill="#a3a3a3"/></svg>
<div class="a" style="left:177.6px;top:838px;width:420.8px;height:15px;background:#c1c1c1"></div>
<svg class="a" style="left:730.5px;top:841px;" width="5.5" height="9" viewBox="0 0 6 9" preserveAspectRatio="none"><path d="M0.5 0V9L6 4.5Z" fill="#505050"/></svg>
<div class="a" style="left:764px;top:120px;width:1px;height:764px;background:#cfd4d9"></div>
<div class="a" style="left:772.7px;top:122.7px;width:37.7px;height:46.6px;background:linear-gradient(180deg,#12ead0 0%,#3fa6dc 35%,#6f78e2 65%,#a629e6 100%);border-radius:50%;box-shadow:0 2px 3px rgba(0,0,0,0.28)"></div><svg class="a" style="left:772.7px;top:122.7px;" width="37.7" height="46.6" viewBox="0 0 40 50" preserveAspectRatio="none"><path d="M29 8 Q35 13 36 22" stroke="rgba(255,255,255,0.55)" stroke-width="1.2" fill="none"/></svg><svg class="a" style="left:779px;top:131px;" width="23.6" height="28.8" viewBox="0 0 24 24" preserveAspectRatio="none"><path d="M10 9V5l-7 7 7 7v-4.1c5 0 8.5 1.6 11 5.1-1-5-4-10-11-11z" fill="#f2f2f2"/></svg>
<span class="t" style="left:820.00px;top:136.01px;font-size:15.70px;color:#111;font-weight:400;font-family:'Liberation Sans';transform:scaleX(0.8651);">Supplier Edit</span>
<div class="a" style="left:1361.5px;top:121px;width:62.5px;height:41px;background:#1e88e5;border-radius:4px;box-shadow:0 2px 3px rgba(0,0,0,0.25)"></div>
<span class="t" style="left:1377.00px;top:133.29px;font-size:16.42px;color:#fff;font-weight:700;font-family:'Liberation Sans';transform:scaleX(0.8431);">Save</span>
<svg class="a" style="left:778.5px;top:190.5px;" width="7.5" height="12.5" viewBox="0 0 7.5 12.5" preserveAspectRatio="none"><path d="M6.5 1L1.5 6.25L6.5 11.5" stroke="#111" stroke-width="2" fill="none"/></svg>
<div class="a" style="left:797.5px;top:170px;width:1.0px;height:55px;background:#e2e2e2"></div>
<div class="a" style="left:798.5px;top:170px;width:11.5px;height:55px;background:linear-gradient(90deg,rgba(0,0,0,0.04),rgba(0,0,0,0))"></div>
<span class="t" style="left:799.00px;top:189.09px;font-size:15.84px;color:#727272;font-weight:400;font-family:'Liberation Sans';transform:scaleX(0.9140);">ddress</span>
<span class="t" style="left:939.60px;top:189.31px;font-size:15.70px;color:#727272;font-weight:400;font-family:'Liberation Sans';transform:scaleX(0.9743);">Contact</span>
<span class="t" style="left:1093.04px;top:189.31px;font-size:15.70px;color:#727272;font-weight:400;font-family:'Liberation Sans';transform:scaleX(0.9629);">Branch</span>
<span class="t" style="left:1215.60px;top:189.06px;font-size:15.99px;color:#262626;font-weight:400;font-family:'Liberation Sans';transform:scaleX(0.9339);">Company Linking</span>
<div class="a" style="left:1192.3px;top:222px;width:161.5px;height:3px;background:linear-gradient(90deg,#1e88e5,#7c4dff)"></div>
<div class="a" style="left:1383px;top:170px;width:10px;height:55px;background:linear-gradient(90deg,rgba(0,0,0,0),rgba(0,0,0,0.045))"></div>
<div class="a" style="left:1391px;top:191.4px;width:1px;height:11.3px;background:#444"></div>
<div class="a" style="left:1393px;top:170px;width:1px;height:55px;background:#e0e0e0"></div>
<svg class="a" style="left:1405.5px;top:190.5px;" width="7.5" height="12.5" viewBox="0 0 7.5 12.5" preserveAspectRatio="none"><path d="M1 1L6 6.25L1 11.5" stroke="#111" stroke-width="2" fill="none"/></svg>
<div class="a" style="left:767px;top:224px;width:657px;height:2px;background:#e6e6e6"></div>
<div class="a" style="left:768px;top:226px;width:656px;height:101px;background:#f8f8f8"></div>
<div class="a" style="left:772.7px;top:253.7px;width:37.3px;height:46.0px;background:linear-gradient(180deg,#12ead0 0%,#3fa6dc 35%,#6f78e2 65%,#a629e6 100%);border-radius:50%;box-shadow:0 2px 3px rgba(0,0,0,0.28)"></div><svg class="a" style="left:772.7px;top:253.7px;" width="37.3" height="46.0" viewBox="0 0 40 50" preserveAspectRatio="none"><path d="M29 8 Q35 13 36 22" stroke="rgba(255,255,255,0.55)" stroke-width="1.2" fill="none"/></svg><div class="a" style="left:781.85px;top:275.09999999999997px;width:19.0px;height:3.2px;background:#f3f3f3"></div><div class="a" style="left:789.85px;top:265.0px;width:3.0px;height:23.4px;background:#f3f3f3"></div>
<div class="a" style="left:814.3px;top:230.3px;width:401.7px;height:67.7px;background:#fbfbfb;border:1px solid #dedede;border-radius:6px;box-sizing:border-box"></div>
<svg class="a" style="left:828px;top:257.5px;" width="17" height="19.0" viewBox="0 0 17 19" preserveAspectRatio="none"><circle cx="6.8" cy="7" r="5.4" stroke="#111" stroke-width="2" fill="none"/><path d="M10.6 11.3L16 17.8" stroke="#111" stroke-width="2.2"/></svg>
<span class="t" style="left:849.00px;top:257.03px;font-size:17.44px;color:#707070;font-weight:400;font-family:'Liberation Sans';transform:scaleX(0.9441);">Search</span>
<div class="a" style="left:761px;top:238px;width:62px;height:75px;border:5px solid #ec1c24;border-radius:50%;box-sizing:border-box"></div>
<span class="t" style="left:1216.50px;top:258.65px;font-size:11.63px;color:#888;font-weight:400;font-family:'Liberation Sans';transform:scaleX(0.8041);">Rows</span>
<span class="t" style="left:1215.78px;top:277.02px;font-size:14.97px;color:#222;font-weight:400;font-family:'Liberation Sans';transform:scaleX(0.7178);">10</span>
<svg class="a" style="left:1257.5px;top:282px;" width="9.0" height="5.5" viewBox="0 0 9 5.5" preserveAspectRatio="none"><path d="M0 0H9L4.5 5.5Z" fill="#666"/></svg>
<div class="a" style="left:1216px;top:299px;width:55px;height:1.2px;background:#8a8a8a"></div>
<svg class="a" style="left:1276px;top:282px;" width="12" height="13.6" viewBox="0 0 12 14" preserveAspectRatio="none"><path d="M1 0V14" stroke="#adadad" stroke-width="1.45"/><path d="M11 1L5.2 7L11 13" stroke="#adadad" stroke-width="1.45" fill="none"/></svg><svg class="a" style="left:1299px;top:282px;" width="7" height="13.6" viewBox="0 0 7 14" preserveAspectRatio="none"><path d="M6.2 1L1 7L6.2 13" stroke="#adadad" stroke-width="1.45" fill="none"/></svg><svg class="a" style="left:1391px;top:282px;" width="7" height="13.6" viewBox="0 0 7 14" preserveAspectRatio="none"><path d="M0.8 1.5L6 7L0.8 12.5" stroke="#adadad" stroke-width="1.8" fill="none"/></svg><svg class="a" style="left:1409px;top:282px;" width="12" height="13.6" viewBox="0 0 12 14" preserveAspectRatio="none"><path d="M1 1.5L7 7L1 12.5" stroke="#adadad" stroke-width="1.8" fill="none"/><path d="M11 0V14" stroke="#adadad" stroke-width="1.8"/></svg>
<span class="t" style="left:1312.80px;top:280.47px;font-size:15.15px;color:#111;font-weight:400;font-family:'Liberation Sans';transform:scaleX(0.9350);">page</span>
<svg class="a" style="left:1348.3px;top:281.1px;" width="5.0" height="12.8" viewBox="0 0 10 24" preserveAspectRatio="none"><path d="M3.6 0H10V24H4V5.5L0 7V2.2Z" fill="#111"/></svg>
<span class="t" style="left:1360.60px;top:280.25px;font-size:15.41px;color:#111;font-weight:400;font-family:'Liberation Sans';transform:scaleX(0.7744);">of</span>
<svg class="a" style="left:1378.3px;top:283.3px;" width="4.5" height="10.6" viewBox="0 0 10 24" preserveAspectRatio="none"><path d="M3.6 0H10V24H4V5.5L0 7V2.2Z" fill="#111"/></svg>
<div class="a" style="left:767px;top:327px;width:657px;height:557px;border:1px solid #babfc7;border-bottom:none;box-sizing:border-box;background:#fff"></div>
<div class="a" style="left:768px;top:329px;width:636px;height:37px;background:#d3d3d3"></div>
<div class="a" style="left:1085.5px;top:339px;width:1.0px;height:18px;background:#c2c2c2"></div>
<span class="t" style="left:779.00px;top:342.32px;font-size:13.08px;color:#555;font-weight:400;font-family:'Liberation Sans';transform:scaleX(0.8720);">Company Code</span>
<span class="t" style="left:1097.60px;top:342.32px;font-size:13.08px;color:#555;font-weight:400;font-family:'Liberation Sans';transform:scaleX(0.8703);">Company Name</span>
<div class="a" style="left:768px;top:366px;width:636px;height:33px;background:#fff;border-bottom:1px solid #dde2eb;box-sizing:border-box"></div>
<div class="a" style="left:768px;top:366px;width:636px;height:1px;background:#e3e6e9"></div>
<span class="t" style="left:779.00px;top:375.94px;font-size:14.24px;color:#1e1e1e;font-weight:400;font-family:'Liberation Sans';transform:scaleX(0.8228);">rahat testing</span>
<span class="t" style="left:1096.82px;top:375.94px;font-size:14.24px;color:#1e1e1e;font-weight:400;font-family:'Liberation Sans';transform:scaleX(0.7783);">Malaysia</span>
<div class="a" style="left:1404px;top:329px;width:1px;height:555px;background:#babfc7"></div>
<div class="a" style="left:1405px;top:347px;width:18px;height:1px;background:#babfc7"></div>
<div class="a" style="left:1405px;top:442px;width:18px;height:1px;background:#babfc7"></div>
<div class="a" style="left:1405px;top:525px;width:18px;height:1px;background:#babfc7"></div>
<svg class="a" style="left:1409px;top:362px;" width="10" height="10" viewBox="0 0 10 10" preserveAspectRatio="none"><path d="M0.5 0V10M3.5 0V10M6.5 0V10M9.5 0V10" stroke="#333" stroke-width="1"/></svg>
<span class="t" style="left:1419.71px;top:379.00px;font-size:12.06px;color:#1a1a1a;font-weight:400;font-family:'Liberation Sans';transform:rotate(90deg) scaleX(1.0882);">Columns</span>
<svg class="a" style="left:1409.3px;top:458px;" width="10.5" height="10.5" viewBox="0 0 10.5 10.5" preserveAspectRatio="none"><path d="M0.6 0.6 H9.9 Q7.2 3.4 6.1 5.8 L4.3 9.8 Q4.6 7.2 4.2 5.8 Q2.8 3.2 0.6 0.6 Z" stroke="#111" stroke-width="1.1" fill="none" stroke-linejoin="round"/></svg>
<span class="t" style="left:1419.71px;top:471.00px;font-size:12.06px;color:#1a1a1a;font-weight:400;font-family:'Liberation Sans';transform:rotate(90deg) scaleX(1.2298);">Filters</span>
<div class="a" style="left:1426px;top:120px;width:1px;height:764px;background:#d8d8d8"></div>
<div class="a" style="left:0px;top:120px;width:1440px;height:16px;background:linear-gradient(rgba(0,0,0,0.24),rgba(0,0,0,0.1) 30%,rgba(0,0,0,0.03) 65%,rgba(0,0,0,0))"></div>
<div class="a" style="left:0px;top:898.6px;width:1440px;height:1.4px;background:#2c2c2c"></div>
</div></body></html>
